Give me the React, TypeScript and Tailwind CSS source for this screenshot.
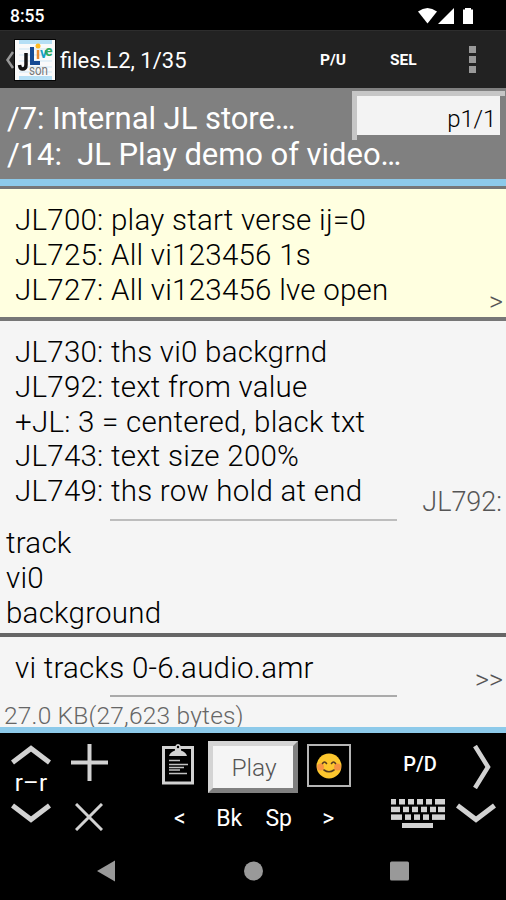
import type { ReactNode } from "react";

const playLines = [
  "JL700: play start verse ij=0",
  "JL725: All vi123456 1s",
  "JL727: All vi123456 lve open",
];

const trackLines = [
  "JL730: ths vi0 backgrnd",
  "JL792: text from value",
  "+JL: 3 = centered, black txt",
  "JL743: text size 200%",
  "JL749: ths row hold at end",
];

const noteLines = ["track", "vi0", "background"];

// key start / width pairs for every keyboard row
const keyRows = [
  [[0, 5], [8, 6], [17, 6], [26, 6], [35, 6], [44, 10]],
  [[0, 9], [12, 6], [21, 6], [30, 6], [39, 6], [47, 7]],
  [[0, 11], [14, 6], [23, 6], [32, 6], [41, 13]],
];

function StatusBar() {
  return (
    <div className="flex h-[30px] items-center justify-between bg-black pl-[10px] pr-8 text-white">
      <span className="pt-[3px] text-[17.5px] font-medium leading-none">8:55</span>
      <svg width="56" height="18" viewBox="0 0 56 18" fill="#fff" className="mt-px">
        <path d="M0 4.500Q9.500-2.500 19 4.500L9.500 16.500Z" />
        <path d="M20 17L36 1V17Z" />
        <path d="M47 1h6v1.500h2V17H45V2.500h2Z" />
      </svg>
    </div>
  );
}

function AppLogo() {
  return (
    <svg width="42" height="42" viewBox="0 0 42 42">
      <rect width="42" height="42" fill="#050505" />
      <rect x="1" y="1" width="40" height="40" fill="#fafafa" />
      <path d="M5 1h33v4H5zM5 37h33v4H5z" fill="#b5dff5" />
      <path d="M5 10h33M5 16h33M5 22h33M5 28h33M5 33h33" stroke="#cfe7f5" />
      <path d="M12 14V26Q12 30 8.500 30Q6 30 5.500 26" fill="none" stroke="#111" strokeWidth="3.500" />
      <path d="M18 8V24H26" fill="none" stroke="#164a94" strokeWidth="4" />
      <circle cx="24" cy="7" r="2.500" fill="#fb2" />
      <path d="M24 11v9" stroke="#e98a32" strokeWidth="2.500" />
      <text x="26" y="19" fontSize="14" fontWeight="700" fill="#159fc7">v</text>
      <text x="31" y="17" fontSize="14" fontWeight="700" fill="#2eaa62">e</text>
      <text x="15" y="36" fontSize="15" fill="#777" textLength="19" lengthAdjust="spacingAndGlyphs">son</text>
    </svg>
  );
}

function ActionBar() {
  return (
    <header className="flex h-[58px] items-center border-t border-[#2d2d2d] bg-[#222] text-white">
      <svg width="14" height="24" viewBox="0 0 14 24" fill="none" stroke="#999" strokeWidth="2.500">
        <path d="M13 4L7.500 12L13 20" />
      </svg>
      <AppLogo />
      <h1 className="ml-1 w-[260px] pt-[2px] text-[22px] font-normal leading-none">files.L2, 1/35</h1>
      <span className="w-[70px] pt-[2px] text-[15.5px] font-bold leading-none">P/U</span>
      <span className="w-[79px] pt-[2px] text-[15.5px] font-bold leading-none">SEL</span>
      <div className="flex flex-col gap-[3.5px]">
        <i className="size-[6.5px] bg-[#999]" />
        <i className="size-[6.5px] bg-[#999]" />
        <i className="size-[6.5px] bg-[#999]" />
      </div>
    </header>
  );
}

function PathHeader() {
  return (
    <div className="flex h-[91px] justify-between bg-[#808080] pl-[7px] pr-px">
      <div className="whitespace-pre pt-[13px] text-[31px] leading-[36px] tracking-[-0.05px] text-white">
        <p className="w-0">/7: Internal JL store…</p>
        <p className="w-0">/14:  JL Play demo of video…</p>
      </div>
      <div className="mt-[3px] h-[49px] w-[153px]">
        <div className="h-[5px] bg-[#c6c6c6]" />
        <div className="flex h-[44px] w-[148px] items-start bg-[#c6c6c6] pl-[5px] [clip-path:polygon(0_0,100%_0,100%_39px,5px_39px,5px_100%,0_100%)]">
          <span className="flex h-[39px] w-full items-center justify-end bg-[#f3f3f3] pr-[4px] pt-[6px] text-[24px] font-light leading-none tracking-[-0.2px] text-black">
            p1/1
          </span>
        </div>
      </div>
    </div>
  );
}

function Lines({ items }: { items: string[] }) {
  return (
    <div className="whitespace-nowrap text-[29.5px] font-light leading-[34.8px] tracking-[0.24px] text-black">
      {items.map((line) => (
        <p key={line}>{line}</p>
      ))}
    </div>
  );
}

function Aside({ children }: { children: ReactNode }) {
  return <span className="self-end whitespace-nowrap text-[27px] font-light leading-[30px] text-[#555]">{children}</span>;
}

function FileList() {
  return (
    <main className="h-[538px] overflow-hidden bg-[#f5f5f5]">
      <section className="flex h-[128px] justify-between bg-[#ffffe0] pl-[15px] pr-[3px] pt-[14px]">
        <Lines items={playLines} />
        <Aside>&gt;</Aside>
      </section>
      <section className="h-[316px] border-t-[4px] border-[#777]">
        <div className="flex h-[198px] justify-between pb-[2px] pl-[15px] pr-1 pt-[14px]">
          <Lines items={trackLines} />
          <Aside>JL792:</Aside>
        </div>
        <div className="ml-[110px] h-[2px] w-[287px] bg-[#bdbdbd]" />
        <div className="pl-[6px] pt-[5px]">
          <Lines items={noteLines} />
        </div>
      </section>
      <section className="border-t-[4px] border-[#666]">
        <div className="flex h-[58px] justify-between pl-[15px] pr-[3px] pt-[14px]">
          <Lines items={["vi tracks 0-6.audio.amr"]} />
          <Aside>&gt;&gt;</Aside>
        </div>
        <div className="ml-[110px] h-[2px] w-[287px] bg-[#aaa]" />
        <p className="pl-1 pt-1 text-[24.5px] font-light leading-[30px] tracking-[0.2px] text-[#666]">27.0 KB(27,623 bytes)</p>
      </section>
    </main>
  );
}

function Chevron({ down = false }: { down?: boolean }) {
  return (
    <svg width="40" height="20" viewBox="0 0 40 20" fill="none" stroke="#d2d2d2" strokeWidth="5">
      <path d={down ? "M1.500 2.500L20 16.500L38.500 2.500" : "M1.500 17.500L20 3.500L38.500 17.500"} />
    </svg>
  );
}

function ClipboardIcon() {
  return (
    <svg width="32" height="41" viewBox="0 0 32 41">
      <path d="M1.500 3.500h29V39H1.500Z" fill="none" stroke="#d2d2d2" strokeWidth="3" />
      <path d="M7 12Q8 8 13 6.500Q12.500 0 16 0T19 6.500Q24 8 25 12Z" fill="#d2d2d2" />
      <circle cx="16" cy="3" r="1.200" fill="#000" />
      <path d="M7 16.500h11M7 20.500h19M7 23.500h15M7 26h11M7 29.500h18" stroke="#c2c2c2" strokeWidth="1.700" />
    </svg>
  );
}

function SmileIcon() {
  return (
    <svg width="26" height="26" viewBox="0 0 26 26" fill="none">
      <circle cx="13" cy="13" r="12.500" fill="#fdc72e" />
      <circle cx="4.500" cy="14" r="3.500" fill="#f79443" />
      <circle cx="21.500" cy="14" r="3.500" fill="#f79443" />
      <path d="M6.500 10.500Q8.500 7.500 10.500 10.500M15.500 10.500Q17.500 7.500 19.500 10.500M8 17Q13 20.500 18 17" stroke="#553b20" strokeWidth="1.600" strokeLinecap="round" />
    </svg>
  );
}

function KeyboardIcon() {
  return (
    <svg width="54" height="30" viewBox="0 0 54 30" fill="#d2d2d2">
      {keyRows.map((row, i) =>
        row.map(([x, w]) => <rect key={`${i}-${x}`} x={x} y={i * 7.7} width={w} height="5.500" />)
      )}
      <rect x="11" y="24" width="31" height="5" />
    </svg>
  );
}

function Toolbar() {
  return (
    <div className="flex h-[110px] bg-black text-white">
      <div className="flex w-[62px] flex-col items-center pt-[12px]">
        <Chevron />
        <span className="flex h-[38px] items-center pb-[2px] text-[24px] leading-none tracking-[0.1px]">r–r</span>
        <Chevron down />
      </div>
      <div className="flex w-[54px] flex-col items-center gap-[22px] pt-[11px]">
        <svg width="37" height="37" viewBox="0 0 37 37" stroke="#d2d2d2" strokeWidth="4">
          <path d="M18.500 0V37M0 18.500H37" />
        </svg>
        <svg width="28" height="28" viewBox="0 0 28 28" stroke="#d2d2d2" strokeWidth="3">
          <path d="M1 1L27 27M27 1L1 27" />
        </svg>
      </div>
      <div className="ml-[39px] flex w-[202px] flex-col">
        <div className="flex h-[67px] items-start gap-[9px] pl-[7px] pt-2">
          <span className="mr-[5px] mt-[3px]">
            <ClipboardIcon />
          </span>
          <button className="h-[52px] w-[90px] shrink-0 border-[5px] border-b-[#808080] border-l-[#d4d4d4] border-r-[#808080] border-t-[#d4d4d4] bg-[#f5f5f5] pl-[2px] pt-[2px] text-[24.5px] font-light leading-none text-[#555]">
            Play
          </button>
          <span className="mt-[3px] flex h-[43px] w-[44px] shrink-0 items-center justify-center border-2 border-[#b5b5b5]">
            <SmileIcon />
          </span>
        </div>
        <div className="grid h-[36px] w-[198px] grid-cols-4 items-center text-center text-[23px] leading-none">
          <span>&lt;</span>
          <span>Bk</span>
          <span>Sp</span>
          <span>&gt;</span>
        </div>
      </div>
      <div className="ml-[33px] flex w-[56px] flex-col items-center">
        <span className="flex h-[66px] items-center pb-1 pl-1 text-[20px] font-medium leading-none">P/D</span>
        <KeyboardIcon />
      </div>
      <div className="ml-[10px] flex w-[40px] flex-col items-center gap-[14px] pt-[12px]">
        <svg width="20" height="44" viewBox="0 0 20 44" fill="none" stroke="#d2d2d2" strokeWidth="4.500" className="ml-3">
          <path d="M3 1L16 22L3 43" />
        </svg>
        <Chevron down />
      </div>
    </div>
  );
}

function NavBar() {
  return (
    <nav className="h-[57px] bg-black pl-[97px]">
      <svg width="314" height="57" viewBox="0 0 314 57" fill="#999">
        <path d="M0 28L18 17.500V38.500Z" />
        <circle cx="156.500" cy="28" r="9.500" />
        <rect x="293" y="18.500" width="19" height="19" rx="1.500" />
      </svg>
    </nav>
  );
}

export default function App() {
  return (
    <div className="h-[900px] w-[506px] overflow-hidden bg-black font-['Roboto',sans-serif]">
      <StatusBar />
      <ActionBar />
      <PathHeader />
      <div className="h-[10px] border-b-[3px] border-[#777] bg-[#8dcaea]" />
      <FileList />
      <div className="h-[6px] bg-[#8dcaea]" />
      <Toolbar />
      <NavBar />
    </div>
  );
}
